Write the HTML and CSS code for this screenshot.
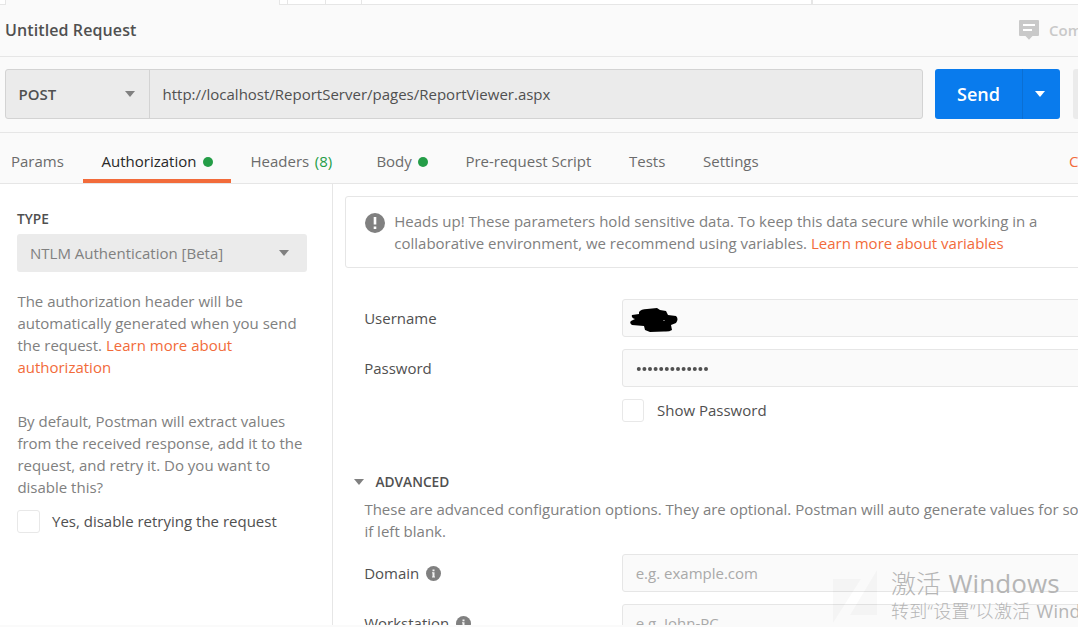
FILE: index.html
```html
<!DOCTYPE html>
<html lang="en">
<head>
<meta charset="utf-8">
<title>Untitled Request</title>
<link rel="stylesheet" href="styles.css">
</head>
<body>
<div class="app">
  <div class="tabstrip">
    <div class="tab-edge"></div>
    <div class="tab-active"></div>
    <div class="tab-gap"></div>
    <div class="tab-button"></div>
    <div class="tab-button"></div>
    <div class="tab-fill"></div>
    <div class="tab-env"></div>
  </div>
  <header class="title-row">
    <h1 class="title">Untitled Request</h1>
    <div class="comments">
      <svg class="comment-icon" width="20" height="20" viewBox="0 0 20 20"><path fill="#c9c9c9" d="M1 0h18a1 1 0 0 1 1 1v14a1 1 0 0 1-1 1h-5.500L10 19.800 6.500 16H1a1 1 0 0 1-1-1V1a1 1 0 0 1 1-1z"/><path stroke="#fff" stroke-width="2" d="M4 5h12M4 10h9"/></svg>
      <span>Comments</span>
    </div>
  </header>
  <section class="url-row">
    <div class="url-box">
      <div class="method"><span>POST</span><i class="caret"></i></div>
      <div class="url">http://localhost/ReportServer/pages/ReportViewer.aspx</div>
    </div>
    <div class="send"><div class="send-label">Send</div><div class="send-more"><i class="caret caret-white"></i></div></div>
    <div class="save"></div>
  </section>
  <nav class="tabs">
    <div class="tab tab-params">Params</div>
    <div class="tab tab-auth">Authorization<i class="dot"></i></div>
    <div class="tab tab-headers">Headers <span class="count">(8)</span></div>
    <div class="tab tab-body">Body<i class="dot"></i></div>
    <div class="tab tab-pre">Pre-request Script</div>
    <div class="tab tab-tests">Tests</div>
    <div class="tab tab-settings">Settings</div>
    <div class="cookies">Cookies</div>
  </nav>
  <main class="content">
    <aside class="side">
      <div class="side-title">TYPE</div>
      <div class="type-select"><span>NTLM Authentication [Beta]</span><i class="caret"></i></div>
      <p class="para">The authorization header will be<br>automatically generated when you send<br>the request. <a class="link">Learn more about<br>authorization</a></p>
      <p class="para para-second">By default, Postman will extract values<br>from the received response, add it to the<br>request, and retry it. Do you want to<br>disable this?</p>
      <div class="check-row"><i class="box"></i><span>Yes, disable retrying the request</span></div>
    </aside>
    <section class="pane">
      <div class="notice">
        <svg class="alert-icon" width="20" height="20" viewBox="0 0 20 20"><circle cx="10" cy="10" r="10" fill="#808080"/><path stroke="#fff" stroke-width="2.600" d="M10 4v7.500M10 13.500v2.500"/></svg>
        <div>Heads up! These parameters hold sensitive data. To keep this data secure while working in a<br>collaborative environment, we recommend using variables. <a class="link">Learn more about variables</a></div>
      </div>
      <div class="field field-first">
        <div class="label">Username</div>
        <div class="input"><svg class="scribble" width="48" height="24" viewBox="0 0 48 24"><path d="M9 4Q11 1 17 1L27 0 30 2 36 3 38 7 46 8Q49 11 46 15L41 17 42 22Q39 24 34 23.500L20 24 15 22 14 18 2 17Q-1 15 1 13L5 11Q1 10 2 7L9 6z"/><path fill="#666" d="M33 12h2v1h-2z"/></svg></div>
      </div>
      <div class="field">
        <div class="label">Password</div>
        <div class="input"><svg class="mask" width="74" height="6" viewBox="0 0 74 6"><path d="M2.800 3h68" /></svg></div>
      </div>
      <div class="check-row check-show"><i class="box"></i><span>Show Password</span></div>
      <div class="advanced"><i class="caret"></i><span>ADVANCED</span></div>
      <p class="para adv-text">These are advanced configuration options. They are optional. Postman will auto generate values for some fields<br>if left blank.</p>
      <div class="field">
        <div class="label">Domain<svg class="info-icon" width="15" height="15" viewBox="0 0 15 15"><circle cx="7.500" cy="7.500" r="7.500" fill="#808080"/><path fill="#fff" fill-opacity=".9" d="M6.500 3.500h2v1.700h-2zM6 6.200h2.500v4.300H9v1H6v-1h.5V7.200H6z"/></svg></div>
        <div class="input">e.g. example.com</div>
      </div>
      <div class="field">
        <div class="label">Workstation<svg class="info-icon" width="15" height="15" viewBox="0 0 15 15"><circle cx="7.500" cy="7.500" r="7.500" fill="#808080"/><path fill="#fff" fill-opacity=".9" d="M6.500 3.500h2v1.700h-2zM6 6.200h2.500v4.300H9v1H6v-1h.5V7.200H6z"/></svg></div>
        <div class="input">e.g. John-PC</div>
      </div>
    </section>
  </main>
  <footer class="footer"></footer>
  <div class="site-mark">
    <svg width="46" height="54" viewBox="0 0 46 54"><path fill="#000" fill-opacity=".022" d="M0 9h28L0 53zM44 0v45H17z"/></svg>
    <span>开知社区</span>
  </div>
  <div class="activate">
    <div class="activate-title">激活 <span class="activate-name">Windows</span></div>
    <div class="activate-sub">转到“设置”以激活 <span class="activate-word">Windows。</span></div>
  </div>
</div>
</body>
</html>
```

FILE: styles.css
```css
* { box-sizing: border-box; }
body { margin: 0; background: #fff; font: 15px/22px "Open Sans", "Noto Sans", sans-serif; color: #505050; }
.app { position: relative; width: 1078px; height: 627px; overflow: hidden; display: flex; flex-direction: column; white-space: nowrap; }
.tabstrip { flex: none; height: 5px; display: flex; background: #fff; }
.tabstrip > div { border-bottom: 1px solid #e6e6e6; }
.tabstrip .tab-edge { width: 5px; }
.tabstrip .tab-active { width: 275px; background: #fafafa; border: solid #e6e6e6; border-width: 0 1px; }
.tab-gap { width: 7px; }
.tab-button { width: 38px; border-left: 1px solid #e6e6e6; }
.tab-button + .tab-button { width: 37px; border-right: 1px solid #e6e6e6; }
.tab-fill { width: 449px; }
.tab-env { flex: 1; border-left: 2px solid #e6e6e6; }
.title-row { flex: none; height: 52px; background: #fafafa; border-bottom: 1px solid #e6e6e6; display: flex; justify-content: space-between; padding: 14px 0 0 5px; }
.title { margin: 0; font-size: 16px; line-height: 22px; font-weight: 600; letter-spacing: .1px; }
.comments { width: 59px; display: flex; color: #c9c9c9; font-weight: 600; }
.comments span { margin: 0 0 0 10px; }
.comment-icon { flex: none; margin-top: 1px; }
.url-row { flex: none; height: 76px; background: #fafafa; border-bottom: 1px solid #e6e6e6; display: flex; padding: 12px 0 0 5px; }
.url-box { flex: none; width: 918px; height: 50px; background: #ebebeb; border: 1px solid #d3d3d3; border-radius: 3px; display: flex; line-height: 48px; }
.method { width: 144px; border-right: 1px solid #d3d3d3; padding: 0 14px 0 12.5px; display: flex; justify-content: space-between; align-items: center; font-weight: 600; }
.url { padding-left: 12.5px; }
.caret { flex: none; display: block; border: solid transparent; border-width: 6px 5px 0; border-top-color: #808080; }
.caret-white { border-top-color: #fff; }
.send { flex: none; margin-left: 12px; width: 125px; height: 50px; border-radius: 3px; background: #097bed; color: #fff; display: flex; font-size: 18px; line-height: 50px; font-weight: 600; }
.send-label { flex: none; width: 88px; padding-left: 22px; border-right: 1px solid #0b6fd3; }
.send-more { flex: 1; display: flex; align-items: center; padding-left: 12px; }
.save { flex: none; margin-left: 13px; width: 40px; height: 50px; border-radius: 3px; background: #ebebeb; }
.tabs { flex: none; height: 51px; background: #fafafa; border-bottom: 1px solid #e6e6e6; display: flex; color: #6b6b6b; line-height: 57px; }
.tab { flex: none; display: flex; align-items: center; height: 50px; line-height: 22px; padding-top: 5px; }
.tab-params { width: 83px; padding-left: 11px; }
.tab-auth { width: 148px; padding: 9px 0 0 18.5px; border-bottom: 4px solid #f26b3a; color: #282828; }
.tab-headers { width: 145px; padding-left: 19.5px; }
.count { color: #249d47; margin-left: 5.5px; }
.tab-body { width: 89px; padding-left: .4px; }
.tab-pre { width: 164px; padding-left: .4px; }
.tab-tests { width: 74px; }
.tab-settings { width: 366px; }
.dot { width: 10px; height: 10px; border-radius: 50%; background: #249d47; margin-left: 6.500px; margin-top: 2px; }
.cookies { color: #f26b3a; }
.content { flex: none; height: 441px; overflow: hidden; display: flex; }
.side { flex: none; width: 333px; border-right: 1px solid #e6e6e6; padding: 24px 0 0 17px; }
.side-title { font-size: 13.7px; font-weight: 600; }
.type-select { margin-top: 4px; width: 290px; height: 38px; border-radius: 3px; background: #ebebeb; display: flex; align-items: center; justify-content: space-between; padding: 0 18px 0 13px; color: #808080; }
.para { margin: 18px 0 0; color: #808080; padding-left: .4px; }
.para-second { margin-top: 32px; }
.link { color: #f26b3a; }
.check-row { display: flex; align-items: center; margin-top: 12px; }
.check-row span { margin-top: -2px; }
.box { width: 23px; height: 23px; border: 1px solid #e8e8e8; border-radius: 3px; margin-right: 12px; background: #fff; }
.pane { flex: none; width: 900px; padding: 12px 0 0 12px; }
.notice { height: 72px; border: 1px solid #e6e6e6; border-radius: 3px; display: flex; padding: 13px 0 0 19px; color: #808080; }
.alert-icon { flex: none; margin: 3px 9.3px 0 0; }
.field { display: flex; height: 38px; margin-bottom: 12px; padding-left: 19px; line-height: 38px; }
.field-first { margin-top: 31px; }
.label { flex: none; width: 258px; display: flex; align-items: center; padding-left: .2px; }
.input { flex: 1; display: flex; align-items: center; background: #fafafa; border: 1px solid #e6e6e6; border-radius: 3px; padding-left: 12.7px; color: #a9a9a9; }
.scribble { margin: 3px 0 0 -5.7px; }
.mask { margin-top: 2px; }
.mask path { stroke: #505050; stroke-width: 4; stroke-linecap: round; stroke-dasharray: 0 5.600; }
.check-show { margin: 0 0 0 277px; }
.check-show .box { width: 22px; margin-right: 13px; }
.advanced { display: flex; align-items: center; margin: 49px 0 0 9px; font-size: 13.7px; font-weight: 600; }
.advanced span { margin-left: 11.5px; }
.adv-text { margin: 5px 0 12px 19px; }
.info-icon { margin-left: 6.500px; }
.footer { flex: none; height: 2px; background: #fafafa; }
.site-mark { position: absolute; left: 833px; top: 570px; display: flex; align-items: center; font: 40px/54px "Noto Sans CJK SC", sans-serif; color: rgba(0, 0, 0, .022); }
.site-mark span { margin-left: 13px; }
.activate { position: absolute; left: 891px; top: 566px; color: #b5b5b5; font-family: "Open Sans", "Noto Sans CJK SC", sans-serif; font-weight: 300; }
.activate-title { font-size: 25px; line-height: 34px; }
.activate-name { margin-left: 1px; font-size: 26px; font-weight: 400; letter-spacing: .1px; }
.activate-sub { font-size: 18px; line-height: 22px; letter-spacing: .3px; }
.activate-word { margin-left: 1px; font-weight: 400; }
```
